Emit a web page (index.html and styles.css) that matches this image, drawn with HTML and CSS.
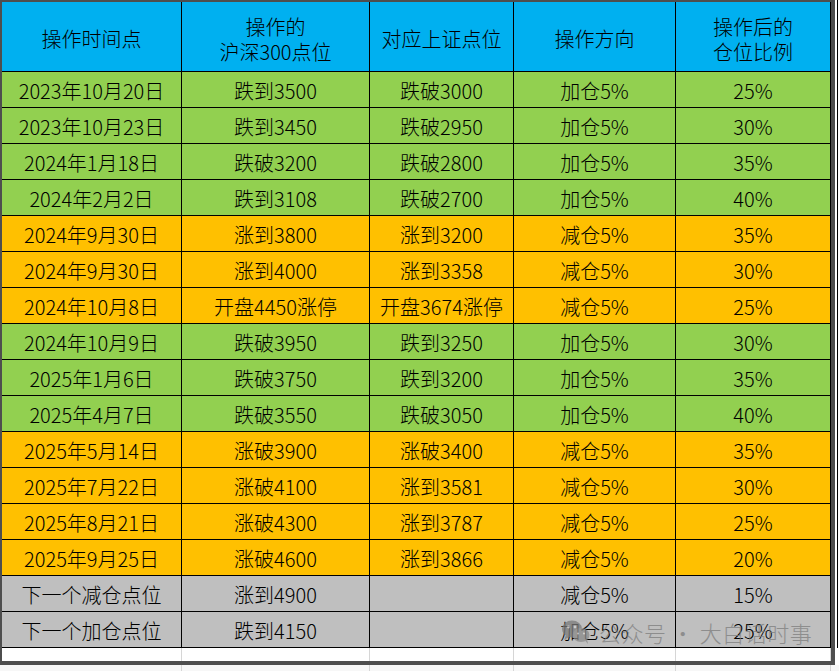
FILE: index.html
```html
<!DOCTYPE html>
<html lang="zh">
<head>
<meta charset="utf-8">
<link rel="stylesheet" href="styles.css">
</head>
<body>
<div class="page">
  <div class="frame">
    <div class="sheet">
      <div class="c h">操作时间点</div>
      <div class="c h">操作的<br>沪深300点位</div>
      <div class="c h">对应上证点位</div>
      <div class="c h">操作方向</div>
      <div class="c h">操作后的<br>仓位比例</div>

      <div class="c g">2023年10月20日</div><div class="c g">跌到3500</div><div class="c g">跌破3000</div><div class="c g">加仓5%</div><div class="c g">25%</div>
      <div class="c g">2023年10月23日</div><div class="c g">跌到3450</div><div class="c g">跌破2950</div><div class="c g">加仓5%</div><div class="c g">30%</div>
      <div class="c g">2024年1月18日</div><div class="c g">跌破3200</div><div class="c g">跌破2800</div><div class="c g">加仓5%</div><div class="c g">35%</div>
      <div class="c g">2024年2月2日</div><div class="c g">跌到3108</div><div class="c g">跌破2700</div><div class="c g">加仓5%</div><div class="c g">40%</div>
      <div class="c o">2024年9月30日</div><div class="c o">涨到3800</div><div class="c o">涨到3200</div><div class="c o">减仓5%</div><div class="c o">35%</div>
      <div class="c o">2024年9月30日</div><div class="c o">涨到4000</div><div class="c o">涨到3358</div><div class="c o">减仓5%</div><div class="c o">30%</div>
      <div class="c o">2024年10月8日</div><div class="c o">开盘4450涨停</div><div class="c o">开盘3674涨停</div><div class="c o">减仓5%</div><div class="c o">25%</div>
      <div class="c g">2024年10月9日</div><div class="c g">跌破3950</div><div class="c g">跌到3250</div><div class="c g">加仓5%</div><div class="c g">30%</div>
      <div class="c g">2025年1月6日</div><div class="c g">跌破3750</div><div class="c g">跌到3200</div><div class="c g">加仓5%</div><div class="c g">35%</div>
      <div class="c g">2025年4月7日</div><div class="c g">跌破3550</div><div class="c g">跌破3050</div><div class="c g">加仓5%</div><div class="c g">40%</div>
      <div class="c o">2025年5月14日</div><div class="c o">涨破3900</div><div class="c o">涨破3400</div><div class="c o">减仓5%</div><div class="c o">35%</div>
      <div class="c o">2025年7月22日</div><div class="c o">涨破4100</div><div class="c o">涨到3581</div><div class="c o">减仓5%</div><div class="c o">30%</div>
      <div class="c o">2025年8月21日</div><div class="c o">涨破4300</div><div class="c o">涨到3787</div><div class="c o">减仓5%</div><div class="c o">25%</div>
      <div class="c o">2025年9月25日</div><div class="c o">涨破4600</div><div class="c o">涨到3866</div><div class="c o">减仓5%</div><div class="c o">20%</div>
      <div class="c s">下一个减仓点位</div><div class="c s">涨到4900</div><div class="c s"></div><div class="c s">减仓5%</div><div class="c s">15%</div>
      <div class="c s">下一个加仓点位</div><div class="c s">跌到4150</div><div class="c s"></div><div class="c s">加仓5%</div><div class="c s">25%</div>

      <div class="c e"></div><div class="c e"></div><div class="c e"></div><div class="c e"></div><div class="c e"></div>
    </div>
  </div>
  <div class="below">
    <div class="bl"></div><div class="bl"></div><div class="bl"></div><div class="bl"></div><div class="bl"></div>
  </div>
  <div class="rightline"></div>
  <div class="watermark">
    <svg class="wm-icon" width="30" height="26" viewBox="0 0 30 26">
      <ellipse cx="11" cy="10" rx="10" ry="8.5" fill="#7a7a7a"/>
      <path d="M5 16 L3 21 L9 17.5 Z" fill="#7a7a7a"/>
      <ellipse cx="20" cy="16" rx="8.5" ry="7" fill="#8a8a8a"/>
      <path d="M24 21.5 L27 25 L26 20 Z" fill="#8a8a8a"/>
      <circle cx="7.5" cy="8" r="1.4" fill="#cfcfcf"/>
      <circle cx="14" cy="8" r="1.4" fill="#cfcfcf"/>
      <circle cx="17" cy="14.5" r="1.1" fill="#d6d6d6"/>
      <circle cx="23" cy="14.5" r="1.1" fill="#d6d6d6"/>
    </svg>
    <span class="wm-text">公众号 · 大白话时事</span>
  </div>
</div>
</body>
</html>
```
FILE: styles.css
```css
html, body {
  margin: 0;
  padding: 0;
  background: #ffffff;
}
.page {
  position: relative;
  width: 839px;
  height: 671px;
  overflow: hidden;
  font-family: "Noto Sans CJK SC", "Liberation Sans", sans-serif;
  font-weight: 300;
  color: #000;
}
.frame {
  width: 829px;
  height: 659px;
  border-top: 2px solid #4e4e4e;
  border-left: 2px solid #4e4e4e;
  border-right: 4px solid #4e4e4e;
  border-bottom: 4px solid #4e4e4e;
  overflow: hidden;
  background: #fff;
}
.sheet {
  display: grid;
  grid-template-columns: 180px 188px 144px 162px 155px;
  grid-template-rows: 70px repeat(16, 36px) 13px;
}
.c {
  box-sizing: border-box;
  border-right: 1px solid #000;
  border-bottom: 1px solid #000;
  display: flex;
  align-items: center;
  justify-content: center;
  text-align: center;
  font-size: 20px;
  line-height: 24px;
  padding-top: 2px;
  white-space: nowrap;
}
.h { background: #00b0f0; padding-top: 4px; line-height: 25px; }
.g { background: #92d050; }
.o { background: #ffc000; }
.s { background: #bfbfbf; }
.e {
  background: #fff;
  border-bottom: none;
  border-right: 1px solid #d6d6d6;
}
.below {
  display: grid;
  grid-template-columns: 182px 188px 144px 162px 155px;
  height: 6px;
  background: #f7f7f7;
}
.bl {
  border-right: 1px solid #d6d6d6;
}
.rightline {
  position: absolute;
  left: 837px;
  top: 0;
  width: 1px;
  height: 648px;
  background: #000;
}
.watermark {
  position: absolute;
  left: 561px;
  top: 619px;
  display: flex;
  align-items: center;
  gap: 8px;
  opacity: 0.75;
}
.wm-icon {
  display: block;
}
.wm-text {
  font-size: 22px;
  line-height: 26px;
  color: #7d7d7d;
  letter-spacing: 0.5px;
}
```
